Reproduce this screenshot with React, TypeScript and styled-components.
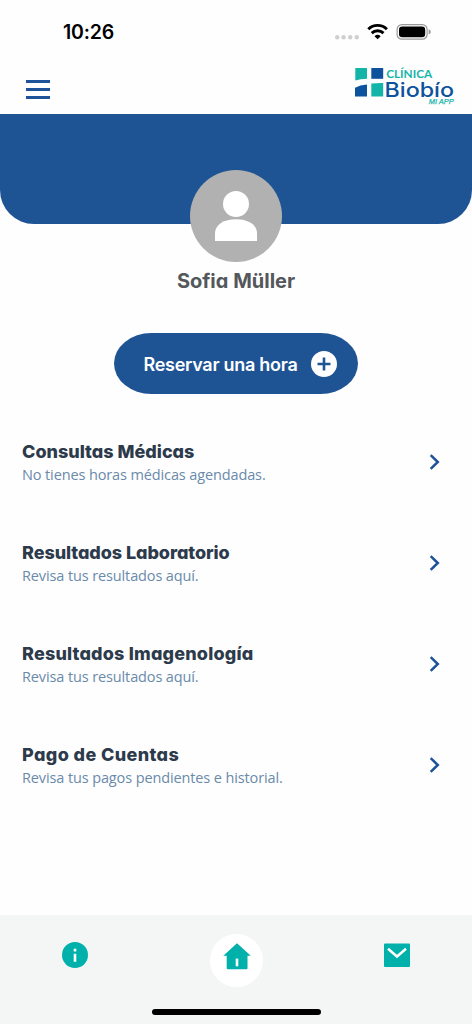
import React from "react";
import styled, { createGlobalStyle } from "styled-components";

const BLUE = "#1f5494";
const TEAL = "#00b0ab";

const GlobalStyle = createGlobalStyle`
  * { box-sizing: border-box; }
  body { margin: 0; background: #fefefe; }
`;

const Screen = styled.div`
  width: 472px;
  height: 1024px;
  display: flex;
  flex-direction: column;
  background: #fefefe;
  overflow: hidden;
  font-family: "Inter", sans-serif;
`;

const StatusBar = styled.div`
  height: 64px;
  flex: none;
  display: flex;
  justify-content: space-between;
  padding: 20px 40px 0 63px;
`;

const Clock = styled.span`
  font-size: 19.5px;
  line-height: 25px;
  font-weight: 600;
  letter-spacing: -0.2px;
  color: #000;
`;

const Header = styled.header`
  height: 50px;
  flex: none;
  display: flex;
  justify-content: space-between;
  padding: 3px 16px 0 26px;
`;

const MenuButton = styled.button`
  width: 24px;
  height: 19px;
  margin-top: 13px;
  padding: 0;
  border: 0;
  background: none;
  display: flex;
  flex-direction: column;
  justify-content: space-between;
`;

const MenuLine = styled.span`
  height: 2.6px;
  width: 100%;
  background: #1d549a;
`;

const Hero = styled.section`
  height: 110px;
  flex: none;
  background: ${BLUE};
  border-radius: 0 0 34px 34px;
  display: flex;
  justify-content: center;
  padding-top: 56px;
`;

const Avatar = styled.div`
  width: 92px;
  height: 92px;
  flex: none;
  border-radius: 50%;
  background: #b1b1b1;
  display: flex;
`;

const Name = styled.h1`
  margin: 43px 0 0;
  font-size: 20px;
  line-height: 28px;
  font-weight: 700;
  letter-spacing: 0;
  text-align: center;
  color: #54585c;
  font-feature-settings: "cv11";
`;

const ReserveButton = styled.button`
  width: 244px;
  height: 61px;
  margin: 38px auto 0;
  flex: none;
  border: 0;
  border-radius: 38px / 31px;
  background: ${BLUE};
  color: #fff;
  font-family: inherit;
  font-size: 18px;
  font-weight: 600;
  white-space: nowrap;
  display: flex;
  align-items: center;
  justify-content: space-between;
  padding: 0 21px 0 29.5px;
`;

const ButtonLabel = styled.span`
  letter-spacing: -0.28px;
  padding-top: 1px;
`;

const List = styled.main`
  margin-top: 44px;
  flex: 1;
  padding: 0 31px 0 22px;
`;

const Row = styled.div`
  height: 101px;
  display: flex;
  justify-content: space-between;
`;

const RowTitle = styled.h2<{ $spacing: number }>`
  margin: 0;
  padding-top: 1px;
  font-size: 18px;
  line-height: 26px;
  font-weight: 800;
  letter-spacing: ${(p) => p.$spacing}px;
  color: #2c3a4b;
  font-feature-settings: "cv11";
`;

const RowText = styled.p`
  margin: -1px 0 0;
  font-family: "Open Sans", sans-serif;
  font-size: 14.5px;
  line-height: 22px;
  font-weight: 400;
  letter-spacing: -0.12px;
  color: #6a8aaa;
`;

const Chevron = styled.svg`
  margin-top: 16px;
  flex: none;
`;

const TabBar = styled.nav`
  height: 109px;
  flex: none;
  background: #f4f6f6;
  display: grid;
  grid-template-columns: 150px 1fr 150px;
  justify-items: center;
  align-content: space-between;
  padding: 19px 0 9px;
`;

const Tab = styled.div`
  height: 53px;
  padding-top: 8px;
`;

const HomeTab = styled.div`
  width: 53px;
  height: 53px;
  border-radius: 50%;
  background: #fff;
`;

const HomeIndicator = styled.div`
  grid-column: 1 / -1;
  width: 169px;
  height: 6px;
  border-radius: 3px;
  background: #000;
`;

const rows = [
  { title: "Consultas Médicas", text: "No tienes horas médicas agendadas.", spacing: 0 },
  { title: "Resultados Laboratorio", text: "Revisa tus resultados aquí.", spacing: -0.07 },
  { title: "Resultados Imagenología", text: "Revisa tus resultados aquí.", spacing: 0.18 },
  { title: "Pago de Cuentas", text: "Revisa tus pagos pendientes e historial.", spacing: 0.38 },
];

const StatusIcons = () => (
  <svg width="100" height="24" viewBox="332 20 100 24">
    <g fill="#cfcfcf">
      <circle cx="337.2" cy="37.2" r="2.2" />
      <circle cx="343.6" cy="37.2" r="2.2" />
      <circle cx="350.2" cy="37.2" r="2.2" />
      <circle cx="356.8" cy="37.2" r="2.2" />
    </g>
    <g fill="none" stroke="#000" strokeWidth="2.9">
      <path d="M368.3 29.2a13.3 13.3 0 0 1 18.6 0" />
      <path d="M371.7 33.1a8.5 8.5 0 0 1 11.8 0" />
    </g>
    <path d="M377.6 39.3l-3.1-3.1a4.5 4.5 0 0 1 6.2 0z" fill="#000" />
    <rect x="397.1" y="24.6" width="30" height="14.6" rx="4.8" fill="none" stroke="#999" strokeWidth="1.2" />
    <rect x="399" y="26.5" width="26.2" height="10.8" rx="3.2" fill="#000" />
    <path d="M428.7 29.3q2.1.8 2.1 2.6t-2.1 2.6z" fill="#999" />
  </svg>
);

const Logo = () => (
  <svg width="104" height="42" viewBox="352 67 104 42">
    <path d="M355.3 68H367v10.8q-6.5.3-11.7 1.8z" fill="#14b5a9" />
    <path d="M371.3 68h11.9v10.8h-11.9z" fill="#0d529c" />
    <path d="M367 84.6v11.9h-12v-8.7q5-2.7 12-3.2z" fill="#0d529c" />
    <path d="M371.3 83.6q6.5-.8 11.9-.6v13.5h-11.9z" fill="#14b5a9" />
    <text x="386.2" y="78.3" textLength="46" lengthAdjust="spacingAndGlyphs" fontFamily="Lato" fontSize="12" fontWeight="700" fill="#14b5a9">CLÍNICA</text>
    <text x="384.5" y="96.6" textLength="69.5" lengthAdjust="spacingAndGlyphs" fontFamily="Inter" fontSize="20" fontWeight="500" fill="#0d529c">Biobío</text>
    <text x="428.7" y="104" textLength="25" lengthAdjust="spacingAndGlyphs" fontFamily="Liberation Sans" fontSize="8" fontStyle="italic" fill="#14b5a9" stroke="#14b5a9" strokeWidth=".25">MI APP</text>
  </svg>
);

export default function App() {
  return (
    <Screen>
      <GlobalStyle />
      <StatusBar>
        <Clock>10:26</Clock>
        <StatusIcons />
      </StatusBar>
      <Header>
        <MenuButton aria-label="Menú">
          <MenuLine />
          <MenuLine />
          <MenuLine />
        </MenuButton>
        <Logo />
      </Header>
      <Hero>
        <Avatar>
          <svg width="92" height="92" viewBox="0 0 92 92" fill="#fff">
            <circle cx="46" cy="34" r="13" />
            <path d="M25 71V63.5C25 54.5 34 49.3 46 49.3S67 54.5 67 63.5V71z" />
          </svg>
        </Avatar>
      </Hero>
      <Name>Sofia Müller</Name>
      <ReserveButton>
        <ButtonLabel>Reservar una hora</ButtonLabel>
        <svg width="26" height="26" viewBox="0 0 26 26">
          <circle cx="13" cy="13" r="13" fill="#fff" />
          <path d="M13 6.5v13M6.5 13h13" stroke={BLUE} strokeWidth="2.6" />
        </svg>
      </ReserveButton>
      <List>
        {rows.map((row) => (
          <Row key={row.title}>
            <div>
              <RowTitle $spacing={row.spacing}>{row.title}</RowTitle>
              <RowText>{row.text}</RowText>
            </div>
            <Chevron width="12" height="16" viewBox="0 0 12 16">
              <path d="M1.7 1.2L8.8 8l-7.1 6.8" fill="none" stroke="#1c529a" strokeWidth="2.5" />
            </Chevron>
          </Row>
        ))}
      </List>
      <TabBar>
        <Tab>
          <svg width="26" height="26" viewBox="0 0 26 26">
            <circle cx="13" cy="13" r="13" fill={TEAL} />
            <path d="M13 6.8v2.7M13 11.8v7.9" stroke="#fff" strokeWidth="2.6" />
          </svg>
        </Tab>
        <HomeTab>
          <svg width="53" height="53" viewBox="0 0 53 53">
            <path d="M27 9.3L40.8 21.8H37.5V34.2q0 1-1 1H17.7q-1 0-1-1V21.8H13.3z" fill={TEAL} />
            <path d="M27 24.6v7.7" stroke="#fff" strokeWidth="2.6" />
          </svg>
        </HomeTab>
        <Tab>
          <svg width="26" height="26" viewBox="0 0 26 26">
            <rect y="1.5" width="26" height="23.5" rx="1" fill={TEAL} />
            <path d="M4 6.8l9 7.7 9-7.7" fill="none" stroke="#fff" strokeWidth="2.5" />
          </svg>
        </Tab>
        <HomeIndicator />
      </TabBar>
    </Screen>
  );
}
